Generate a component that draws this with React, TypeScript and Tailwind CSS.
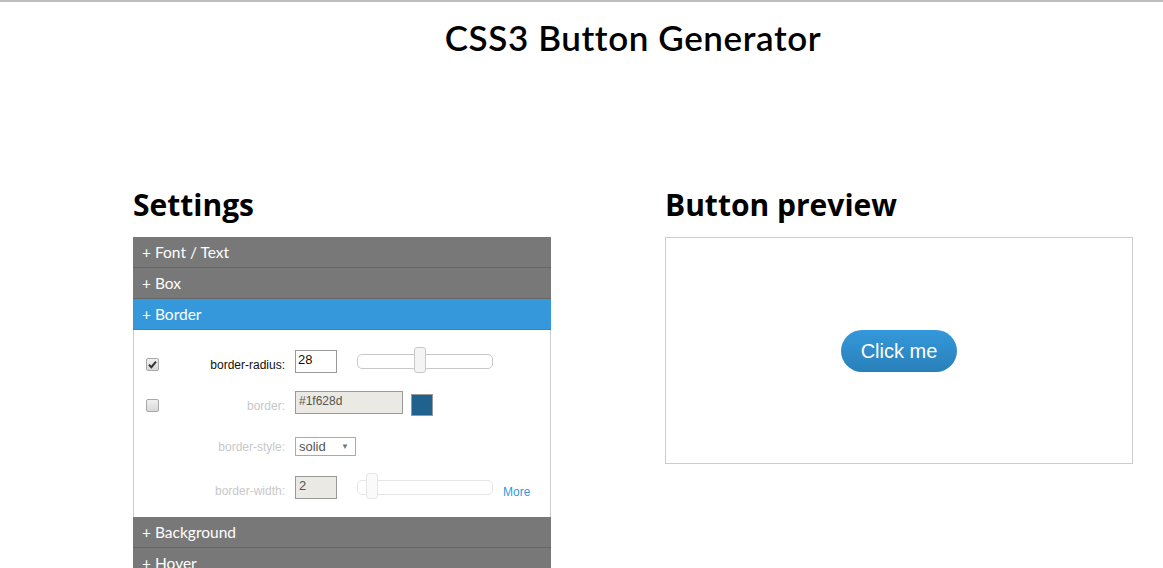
import React from "react";

const headerFont = { fontFamily: "Lato, 'Open Sans', sans-serif" };

function AccHeader({ label, active }: { label: string; active?: boolean }) {
  return (
    <div
      className={
        active
          ? "h-[31px] bg-[#3498db] border-b border-[#2d86c2] text-white text-[15.5px] flex items-center pl-[9px] pt-[2px]"
          : "h-[31px] bg-[#787878] border-b border-[#666666] text-white text-[15.5px] flex items-center pl-[9px] pt-[2px]"
      }
      style={headerFont}
    >
      + {label}
    </div>
  );
}

function Checkbox({ checked }: { checked?: boolean }) {
  return (
    <div className="mt-[5px] w-[13px] h-[13px] rounded-[2px] border border-[#a8a8a8] bg-gradient-to-b from-[#f0f0f0] to-[#d8d8d8] flex items-center justify-center">
      {checked && (
        <svg width="9" height="9" viewBox="0 0 9 9">
          <path d="M1 4.8 L3.4 7.2 L8 1.6" stroke="#333" strokeWidth="2" fill="none" />
        </svg>
      )}
    </div>
  );
}

function Slider({ pos, disabled }: { pos: number; disabled?: boolean }) {
  return (
    <div className="relative w-[136px] h-[15px] ml-[20px]">
      <div
        className={
          disabled
            ? "absolute inset-0 rounded-[5px] border border-[#e6e6e6] bg-white"
            : "absolute inset-0 rounded-[5px] border border-[#c8c8c8] bg-white"
        }
      />
      <div
        className={
          disabled
            ? "absolute top-[-7px] w-[12px] h-[26px] rounded-[3px] border border-[#e6e6e6] bg-[#fafafa]"
            : "absolute top-[-7px] w-[12px] h-[26px] rounded-[3px] border border-[#c8c8c8] bg-[#f4f4f4]"
        }
        style={{ left: pos }}
      />
    </div>
  );
}

export default function App() {
  const arial = { fontFamily: "'Liberation Sans', Arial, sans-serif" };
  return (
    <div className="w-[1163px] h-[568px] overflow-hidden bg-white border-t-2 border-[#bdbdbd]">
      <div className="ml-[133px] w-[1000px]">
        <h1
          className="text-center text-[35px] font-semibold tracking-[0.6px] text-black leading-none pt-[18px]"
          style={{ fontFamily: "Lato, sans-serif" }}
        >
          CSS3 Button Generator
        </h1>
        <div className="flex mt-[135px]">
          <div className="w-[418px]">
            <h2
              className="text-[30px] font-bold text-black leading-[30px] h-[47px]"
              style={{ fontFamily: "'Open Sans', sans-serif" }}
            >
              Settings
            </h2>
            <AccHeader label="Font / Text" />
            <AccHeader label="Box" />
            <AccHeader label="Border" active />
            <div className="border-x border-[#cccccc] bg-white h-[187px] pt-[11px]" style={arial}>
              <div className="flex items-center h-[41px] pl-[12px]">
                <Checkbox checked />
                <div className="w-[126px] text-right text-[12px] text-[#111] pt-[6px]">border-radius:</div>
                <div className="ml-[10px] w-[42px] h-[23px] border border-[#999] bg-white text-[13px] text-[#111] pl-[2px] leading-[18px]">
                  28
                </div>
                <Slider pos={57} />
              </div>
              <div className="flex items-center h-[41px] pl-[12px]">
                <Checkbox />
                <div className="w-[126px] text-right text-[12px] text-[#c8c8c8] pt-[6px]">border:</div>
                <div className="ml-[10px] w-[108px] h-[23px] border border-[#999] bg-[#ebe9e3] text-[12px] text-[#555] pl-[3px] leading-[18px]">
                  #1f628d
                </div>
                <div className="ml-[8px] mt-[4px] w-[22px] h-[22px] border border-[#999] bg-[#1f628d]" />
              </div>
              <div className="flex items-center h-[47px] pl-[12px]">
                <div className="w-[13px]" />
                <div className="w-[126px] text-right text-[12px] text-[#c8c8c8]">border-style:</div>
                <div className="ml-[10px] w-[61px] h-[19px] border border-[#aaa] bg-white flex items-center justify-between pl-[3px] pr-[6px]">
                  <span className="text-[13px] text-[#555]">solid</span>
                  <span className="text-[8px] text-[#777]">▼</span>
                </div>
              </div>
              <div className="flex items-center h-[35px] pl-[12px]">
                <div className="w-[13px]" />
                <div className="w-[126px] text-right text-[12px] text-[#c8c8c8] pt-[6px]">border-width:</div>
                <div className="ml-[10px] w-[42px] h-[23px] border border-[#999] bg-[#ebe9e3] text-[13px] text-[#555] pl-[3px] leading-[18px]">
                  2
                </div>
                <Slider pos={9} disabled />
                <a className="ml-[10px] mt-[9px] text-[12px] text-[#3498db]">More</a>
              </div>
            </div>
            <AccHeader label="Background" />
            <AccHeader label="Hover" />
          </div>
          <div className="ml-[114px] w-[468px]">
            <h2
              className="text-[30px] font-bold text-black leading-[30px] h-[47px]"
              style={{ fontFamily: "'Open Sans', sans-serif" }}
            >
              Button preview
            </h2>
            <div className="h-[227px] border border-[#cccccc] flex items-center justify-center">
              <button
                className="h-[42px] px-[20px] rounded-[28px] bg-gradient-to-b from-[#3498db] to-[#2980b9] text-white text-[20px] leading-none"
                style={arial}
              >
                Click me
              </button>
            </div>
          </div>
        </div>
      </div>
    </div>
  );
}
